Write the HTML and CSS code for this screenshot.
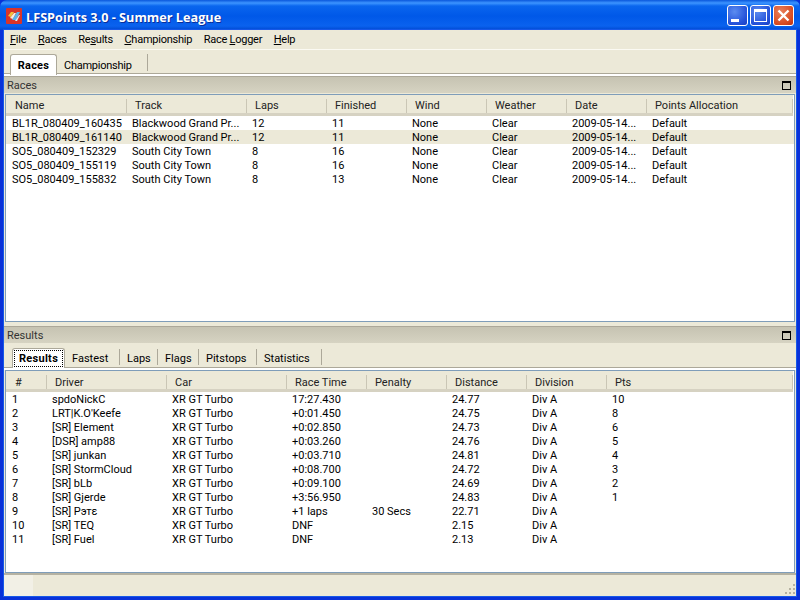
FILE: index.html
```html
<!DOCTYPE html>
<html lang="en">
<head>
<meta charset="utf-8">
<title>LFSPoints 3.0 - Summer League</title>
<link rel="stylesheet" href="styles.css">
</head>
<body>
<div class="window">
  <div class="titlebar">
    <svg class="appicon" width="16" height="16" viewBox="0 0 16 16"><rect width="16" height="16" rx="1" fill="#d8342a"/><path d="M2 8 5 4h3l-3 5z" fill="#f2c23a"/><path d="M4 10 8 5h2l-3 6z" fill="#f5efe0"/><path d="M6 12l5-8h3l-4 8z" fill="#5ab4ec"/><path d="M9 13l4-6h1l-3 6z" fill="#d8f0fc"/></svg>
    <div class="title">LFSPoints 3.0 - Summer League</div>
    <div class="winbtn blue"><span class="minglyph"></span></div>
    <div class="winbtn blue"><span class="maxglyph"></span></div>
    <div class="winbtn red"><svg width="13" height="13" viewBox="0 0 13 13"><path d="M1.5 1.5l10 10M11.500 1.500l-10 10" stroke="#fff" stroke-width="2.400" fill="none"/></svg></div>
  </div>
  <div class="inner">
    <div class="menubar">
      <span class="menu"><u>F</u>ile</span>
      <span class="menu"><u>R</u>aces</span>
      <span class="menu">Re<u>s</u>ults</span>
      <span class="menu"><u>C</u>hampionship</span>
      <span class="menu">Race <u>L</u>ogger</span>
      <span class="menu"><u>H</u>elp</span>
    </div>
    <div class="maintabs">
      <div class="tab active">Races</div>
      <div class="tab sep">Championship</div>
    </div>
    <section class="panel races">
      <div class="phead"><span>Races</span><span class="restore"></span></div>
      <div class="list">
        <div class="row head r"><span>Name</span><span>Track</span><span>Laps</span><span>Finished</span><span>Wind</span><span>Weather</span><span>Date</span><span>Points Allocation</span></div>
        <div class="row r"><span>BL1R_080409_160435</span><span>Blackwood Grand Pr...</span><span>12</span><span>11</span><span>None</span><span>Clear</span><span>2009-05-14...</span><span>Default</span></div>
        <div class="row r alt"><span>BL1R_080409_161140</span><span>Blackwood Grand Pr...</span><span>12</span><span>11</span><span>None</span><span>Clear</span><span>2009-05-14...</span><span>Default</span></div>
        <div class="row r"><span>SO5_080409_152329</span><span>South City Town</span><span>8</span><span>16</span><span>None</span><span>Clear</span><span>2009-05-14...</span><span>Default</span></div>
        <div class="row r"><span>SO5_080409_155119</span><span>South City Town</span><span>8</span><span>16</span><span>None</span><span>Clear</span><span>2009-05-14...</span><span>Default</span></div>
        <div class="row r"><span>SO5_080409_155832</span><span>South City Town</span><span>8</span><span>13</span><span>None</span><span>Clear</span><span>2009-05-14...</span><span>Default</span></div>
      </div>
    </section>
    <section class="panel results">
      <div class="phead"><span>Results</span><span class="restore"></span></div>
      <div class="subtabs">
        <div class="stab active"><span class="focus">Results</span></div>
        <div class="stab sep">Fastest</div>
        <div class="stab sep">Laps</div>
        <div class="stab sep">Flags</div>
        <div class="stab sep">Pitstops</div>
        <div class="stab sep">Statistics</div>
      </div>
      <div class="list">
        <div class="row head s"><span>#</span><span>Driver</span><span>Car</span><span>Race Time</span><span>Penalty</span><span>Distance</span><span>Division</span><span>Pts</span></div>
        <div class="row s"><span>1</span><span>spdoNickC</span><span>XR GT Turbo</span><span>17:27.430</span><span></span><span>24.77</span><span>Div A</span><span>10</span></div>
        <div class="row s"><span>2</span><span>LRT|K.O'Keefe</span><span>XR GT Turbo</span><span>+0:01.450</span><span></span><span>24.75</span><span>Div A</span><span>8</span></div>
        <div class="row s"><span>3</span><span>[SR] Element</span><span>XR GT Turbo</span><span>+0:02.850</span><span></span><span>24.73</span><span>Div A</span><span>6</span></div>
        <div class="row s"><span>4</span><span>[DSR] amp88</span><span>XR GT Turbo</span><span>+0:03.260</span><span></span><span>24.76</span><span>Div A</span><span>5</span></div>
        <div class="row s"><span>5</span><span>[SR] junkan</span><span>XR GT Turbo</span><span>+0:03.710</span><span></span><span>24.81</span><span>Div A</span><span>4</span></div>
        <div class="row s"><span>6</span><span>[SR] StormCloud</span><span>XR GT Turbo</span><span>+0:08.700</span><span></span><span>24.72</span><span>Div A</span><span>3</span></div>
        <div class="row s"><span>7</span><span>[SR] bLb</span><span>XR GT Turbo</span><span>+0:09.100</span><span></span><span>24.69</span><span>Div A</span><span>2</span></div>
        <div class="row s"><span>8</span><span>[SR] Gjerde</span><span>XR GT Turbo</span><span>+3:56.950</span><span></span><span>24.83</span><span>Div A</span><span>1</span></div>
        <div class="row s"><span>9</span><span>[SR] Рэтε</span><span>XR GT Turbo</span><span>+1 laps</span><span>30 Secs</span><span>22.71</span><span>Div A</span><span></span></div>
        <div class="row s"><span>10</span><span>[SR] TEQ</span><span>XR GT Turbo</span><span>DNF</span><span></span><span>2.15</span><span>Div A</span><span></span></div>
        <div class="row s"><span>11</span><span>[SR] Fuel</span><span>XR GT Turbo</span><span>DNF</span><span></span><span>2.13</span><span>Div A</span><span></span></div>
      </div>
    </section>
    <div class="statusbar"><div class="cell"></div><svg class="grip" width="12" height="12" viewBox="0 0 12 12"><path d="M9 0h2v2H9zM5 4h2v2H5zM9 4h2v2H9zM1 8h2v2H1zM5 8h2v2H5zM9 8h2v2H9z" fill="#b5b1a0"/></svg></div>
  </div>
</div>
</body>
</html>
```
FILE: styles.css
```css
* { box-sizing: border-box; }
html, body { margin: 0; padding: 0; }
body { width: 800px; height: 600px; overflow: hidden; font: 11px Roboto, "Liberation Sans", sans-serif; color: #000; }
.window { width: 800px; height: 600px; display: flex; flex-direction: column; background: #0831d9; padding: 0 4px 4px; }
.titlebar { margin: 0 -4px; padding: 1px 6px 0; height: 30px; flex: none; display: flex; align-items: center; gap: 2px; background: linear-gradient(#0a57dc 0, #3d95ff 3px, #0a66ee 6px, #0058e8 16px, #0a62ee 26px, #0048d0 30px); border-radius: 7px 7px 0 0; }
.appicon { flex: none; margin-right: 2px; }
.title { flex: 1; margin-top: 2px; color: #fff; font: bold 12.7px "Open Sans", "Liberation Sans", sans-serif; text-shadow: 1px 1px 0 #0a2f9a; }
.winbtn { width: 21px; height: 21px; border: 1px solid #fff; border-radius: 3px; display: flex; align-items: center; justify-content: center; }
.blue { background: radial-gradient(circle at 35% 30%, #5c8cf0, #2350d8 70%, #1a40c0); }
.red { background: radial-gradient(circle at 35% 30%, #e8805c, #d84a20 70%, #b83010); }
.minglyph { width: 8px; height: 3px; background: #fff; margin: 9px 5px 0 0; }
.maxglyph { width: 13px; height: 13px; border: 1px solid #fff; border-top-width: 3px; }
.inner { flex: 1; display: flex; flex-direction: column; background: #ece9d8; min-height: 0; box-shadow: 0 0 0 1px #1658e8; }
.menubar { height: 20px; flex: none; display: flex; align-items: flex-start; gap: 11.6px; padding-left: 6px; border-bottom: 1px solid #fbfaf3; }
.menu { line-height: 19px; letter-spacing: -0.25px; }
.maintabs { height: 26px; flex: none; display: flex; align-items: flex-end; padding: 0 0 2px 6px; }
.maintabs, .subtabs { box-shadow: inset 0 -2px 0 #fff, inset 0 -3px 0 #aca899; }
.tab { height: 17px; line-height: 23px; padding: 0 8px; margin-bottom: 3px; letter-spacing: -0.25px; }
.tab.active { font-weight: bold; background: #fff; border: 1px solid #aca899; border-bottom: none; border-radius: 3px 3px 0 0; height: 21px; width: 47px; line-height: 22px; margin-bottom: -1px; text-align: center; padding: 0; letter-spacing: 0.2px; }
.sep { border-right: 1px solid #aca899; }
.tab.sep { width: 91px; padding-left: 7px; }
.panel { display: flex; flex-direction: column; min-height: 0; }
.races { height: 246px; }
.results { flex: 1; margin-top: 4px; }
.phead { height: 17px; flex: none; display: flex; justify-content: space-between; align-items: center; padding: 0 5px 0 3px; background: linear-gradient(#c6c3b2, #d6d3c2); border-top: 1px solid #aca899; color: #333; }
.restore { width: 9px; height: 9px; border: 1px solid #000; border-top-width: 2px; }
.list { flex: 1; margin: 1px 1px 0; background: #fff; border: 1px solid #7f9db9; min-height: 0; }
.results .list { margin-top: 0; }
.row { display: grid; height: 14px; white-space: nowrap; }
.r { grid-template-columns: 120px 120px 80px 80px 80px 80px 80px 1fr; }
.s { grid-template-columns: 40px 120px 120px 80px 80px 80px 80px 1fr; }
.row > span { padding-left: 6px; overflow: hidden; line-height: 16px; }
.alt { background: #ece9d8; }
.head { height: 21px; padding-left: 1px; background: #ece9d8; border-bottom: 3px solid #d6d2c2; color: #222; margin-right: 1px; }
.row.head > span { padding-left: 8px; border-right: 1px solid #cac6b5; margin-top: 4px; height: 14px; line-height: 13px; }
.row.s.head > span { line-height: 15px; }
.subtabs { height: 27px; flex: none; display: grid; grid-template-columns: 53px 55px 38px 41px 58px 65px; align-items: end; padding: 0 0 3px 8px; }
.stab { height: 16px; line-height: 20px; padding-left: 7px; margin-bottom: 2px; }
.stab.active { height: 20px; background: #fff; border: 1px solid #aca899; border-bottom: none; border-radius: 3px 3px 0 0; padding: 1px; font-weight: bold; margin-bottom: -1px; text-align: center; letter-spacing: 0.3px; }
.focus { display: block; border: 1px dotted #000; line-height: 16px; height: 17px; }
.statusbar { height: 23px; flex: none; display: flex; justify-content: space-between; align-items: flex-end; border-top: 2px solid #b5b2a2; }
.cell { width: 29px; height: 21px; background: #f2f0e6; }
.grip { flex: none; }
```
